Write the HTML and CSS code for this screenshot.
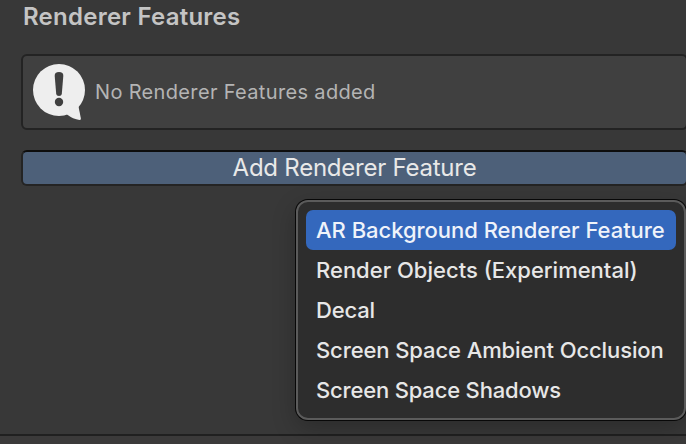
FILE: index.html
```html
<!DOCTYPE html>
<html lang="en">
<head>
<meta charset="utf-8">
<title>Renderer Features</title>
<link rel="stylesheet" href="styles.css">
</head>
<body>
<main class="inspector">
  <h1 class="heading"><span>Renderer Features</span></h1>
  <section class="help-box">
    <svg class="help-icon" viewBox="0 0 54 58" aria-hidden="true">
      <circle class="bubble" cx="27" cy="27" r="26"/>
      <path class="bubble" d="M35 51.500Q41 56 47.500 57Q49 57 48.900 55.500L46.500 43.500L40 40z"/>
      <path class="mark" d="M27 9C30 9 31.500 10.500 31.300 13L29.800 31Q29.500 33 27 33Q24.500 33 24.200 31L22.700 13C22.500 10.500 24 9 27 9z"/>
      <circle class="mark" cx="27" cy="39" r="4.200"/>
    </svg>
    <p class="help-text">No Renderer Features added</p>
  </section>
  <button class="add-button" type="button"><span>Add Renderer Feature</span></button>
  <footer class="divider"></footer>
</main>
<ul class="menu">
  <li class="item selected"><span class="label-ar">AR Background Renderer Feature</span></li>
  <li class="item"><span class="label-objects">Render Objects (Experimental)</span></li>
  <li class="item"><span class="label-decal">Decal</span></li>
  <li class="item"><span class="label-ssao">Screen Space Ambient Occlusion</span></li>
  <li class="item"><span class="label-shadows">Screen Space Shadows</span></li>
</ul>
</body>
</html>
```
FILE: styles.css
```css
* {
  box-sizing: border-box;
}

body {
  margin: 0;
  width: 686px;
  height: 444px;
  overflow: hidden;
  background: #383838;
  font-family: Inter, "Liberation Sans", sans-serif;
}

.inspector {
  display: flex;
  flex-direction: column;
  height: 444px;
  padding-left: 21px;
}

.heading {
  margin: 0;
  height: 54px;
  padding: 2px 0 0 2px;
  color: #c4c4c4;
  font-size: 24px;
  font-weight: 600;
  line-height: 30px;
  letter-spacing: 0.25px;
  white-space: nowrap;
}

.help-box {
  display: flex;
  align-items: center;
  width: 667px;
  height: 76px;
  padding-left: 9px;
  border: 2px solid #232323;
  border-radius: 6px;
  background: #404040;
}

.help-icon {
  width: 54px;
  height: 58px;
}

.bubble {
  fill: #eeeeee;
}

.mark {
  fill: #404040;
}

.help-text {
  margin: 0 0 0 9px;
  color: #b4b4b4;
  font-size: 20px;
  line-height: 24px;
  letter-spacing: 0.34px;
  white-space: nowrap;
}

.add-button {
  width: 667px;
  height: 36px;
  margin: 20px 0 0;
  padding: 0;
  border: 2px solid #242424;
  border-top-color: #0d0d0d;
  border-radius: 6px;
  background: #4d6079;
  color: #e8e8e8;
  font-family: inherit;
  font-size: 24px;
  font-weight: 400;
  line-height: 32px;
  letter-spacing: -0.24px;
  white-space: nowrap;
}

.divider {
  height: 10px;
  margin: auto 0 0 -21px;
  border-top: 2px solid #202020;
  background: #3b3a3a;
}

.menu {
  position: absolute;
  top: 200px;
  left: 296px;
  width: 390px;
  height: 220px;
  margin: 0;
  padding: 8px;
  border: 2px solid #5b5b5b;
  border-radius: 12px;
  background: #2d2d2d;
  box-shadow: 0 0 0 1px #080808, 0 8px 24px rgba(0, 0, 0, 0.24);
  list-style: none;
}

.item {
  height: 40px;
  padding-left: 10px;
  border-radius: 7px;
  color: #e7e7e7;
  font-size: 22px;
  font-weight: 500;
  line-height: 40px;
  white-space: nowrap;
}

.selected {
  background: #3468bd;
  color: #eff3fa;
}

.label-ar {
  letter-spacing: -0.03px;
}

.label-decal,
.label-shadows {
  letter-spacing: -0.18px;
}

.label-ssao {
  letter-spacing: -0.1px;
}
```
